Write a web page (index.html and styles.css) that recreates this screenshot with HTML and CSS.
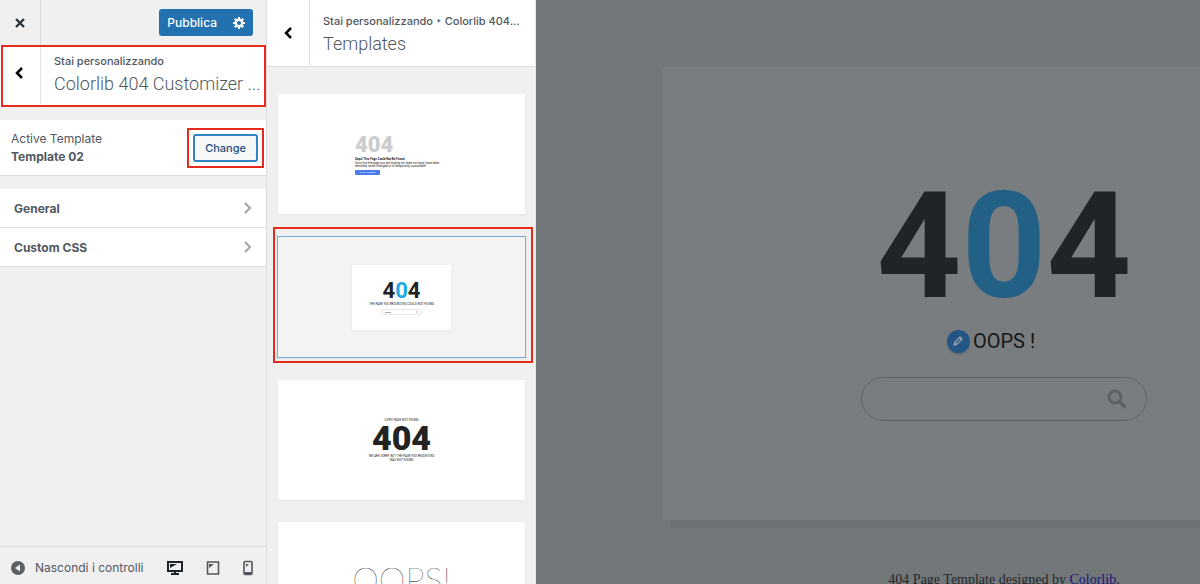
FILE: index.html
```
<!DOCTYPE html>
<html lang="it">
<head>
  <meta charset="UTF-8">
  <title>Customizer - Colorlib 404</title>
  <link rel="stylesheet" href="styles.css">
</head>
<body>

<div class="customizer">
  <!-- Left: controls -->
  <aside class="sidebar">
    <div class="top-bar">
      <button class="close-btn" aria-label="Chiudi">
        <svg width="12" height="12" viewBox="0 0 12 12"><path d="M2 2l8 8M10 2l-8 8" stroke="#2c3338" stroke-width="2.4"/></svg>
      </button>
      <div class="publish">
        <button class="publish-btn">Pubblica</button>
        <button class="gear-btn" aria-label="Impostazioni">
          <svg width="12" height="12" viewBox="0 0 12 12">
            <g stroke="#fff" fill="none" stroke-width="2.2">
              <circle cx="6" cy="6" r="3.2"/>
              <path d="M6 0v2.4M6 9.6v2.4M0 6h2.4M9.6 6h2.4M1.8 1.8l1.6 1.6M8.6 8.6l1.6 1.6M10.2 1.8l-1.6 1.6M3.4 8.6l-1.6 1.6"/>
            </g>
          </svg>
        </button>
      </div>
    </div>

    <div class="panel-title marked">
      <button class="back-btn" aria-label="Indietro">
        <svg width="10" height="14" viewBox="0 0 10 14"><path d="M8 2L3 7l5 5" fill="none" stroke="#000" stroke-width="2.5"/></svg>
      </button>
      <div class="title-text">
        <span class="crumb">Stai personalizzando</span>
        <h1>Colorlib 404 Customizer ...</h1>
      </div>
    </div>

    <div class="active-template">
      <div>
        <p>Active Template</p>
        <strong>Template 02</strong>
      </div>
      <div class="change-wrap">
        <button class="change-btn">Change</button>
      </div>
    </div>

    <nav class="sections">
      <button>General
        <svg width="8" height="14" viewBox="0 0 8 14"><path d="M1 2l5 5-5 5" fill="none" stroke="#a0a4a8" stroke-width="2"/></svg>
      </button>
      <button>Custom CSS
        <svg width="8" height="14" viewBox="0 0 8 14"><path d="M1 2l5 5-5 5" fill="none" stroke="#a0a4a8" stroke-width="2"/></svg>
      </button>
    </nav>

    <footer class="side-footer">
      <button class="collapse-btn">
        <svg width="14" height="14" viewBox="0 0 14 14"><circle cx="7" cy="7" r="7" fill="#5c6064"/><path d="M9 3.5v7L4 7z" fill="#f0f0f1"/></svg>
        Nascondi i controlli
      </button>
      <div class="devices">
        <button aria-label="Desktop">
          <svg width="16" height="16" viewBox="0 0 16 16"><path d="M1 2h14v9H1z" fill="none" stroke="#1d2327" stroke-width="2"/><path d="M7 11h2v2h3v2H4v-2h3z" fill="#1d2327"/><path d="M3 4h7L3 8z" fill="#1d2327"/></svg>
        </button>
        <button aria-label="Tablet">
          <svg width="14" height="16" viewBox="0 0 14 16"><path d="M1.5 2h11v12h-11z" fill="none" stroke="#50575e" stroke-width="1.6"/><path d="M3 4h5L3 8z" fill="#50575e"/></svg>
        </button>
        <button aria-label="Smartphone">
          <svg width="10" height="16" viewBox="0 0 10 16"><rect x="1" y="1.5" width="8" height="13" rx="1" fill="none" stroke="#50575e" stroke-width="1.6"/><path d="M3 4h3L3 7zM2 12h6v2H2z" fill="#50575e"/></svg>
        </button>
      </div>
    </footer>
  </aside>

  <!-- Middle: template list -->
  <section class="templates">
    <div class="templates-head">
      <button class="back-btn" aria-label="Indietro">
        <svg width="10" height="14" viewBox="0 0 10 14"><path d="M8 2L3 7l5 5" fill="none" stroke="#000" stroke-width="2.5"/></svg>
      </button>
      <div class="title-text">
        <span class="crumb">Stai personalizzando ‣ Colorlib 404...</span>
        <h2>Templates</h2>
      </div>
    </div>

    <div class="template-list">
      <div class="thumb thumb-one">
        <div class="mini">
          <div class="digits">404</div>
          <b>Oops! This Page Could Not Be Found</b>
          <p>Sorry but the page you are looking for does not exist, have been removed, name changed or is temporarily unavailable</p>
          <span class="mini-btn">Go To Homepage</span>
        </div>
      </div>

      <div class="thumb selected">
        <div class="mini-card">
          <div class="digits">4<span>0</span>4</div>
          <p>THE PAGE YOU REQUESTED COULD NOT FOUND</p>
          <div class="mini-search"><span>Search</span><i></i></div>
        </div>
      </div>

      <div class="thumb thumb-three">
        <p>OOPS! PAGE NOT FOUND</p>
        <div class="digits">404</div>
        <p>WE ARE SORRY, BUT THE PAGE YOU REQUESTED<br>WAS NOT FOUND</p>
      </div>

      <div class="thumb thumb-four">
        <div class="digits">OOPS!</div>
      </div>
    </div>
  </section>

  <!-- Right: dimmed site preview -->
  <main class="preview">
    <div class="page-card">
      <div class="big-404">4<span>0</span>4</div>
      <h3>
        <button class="edit-btn" aria-label="Modifica">
          <svg width="14" height="14" viewBox="0 0 14 14"><path d="M2 12l1-4 6-6 3 3-6 6z" fill="#8f9ca8"/><path d="M5 9l4-4" stroke="#245685" stroke-width="1.5"/></svg>
        </button>OOPS !
      </h3>
      <form class="search">
        <input type="text" aria-label="Search">
        <svg width="20" height="20" viewBox="0 0 20 20"><circle cx="8" cy="8" r="6" fill="none" stroke="#5b5f62" stroke-width="2.8"/><path d="M12.5 12.5l6 6" stroke="#5b5f62" stroke-width="3.2"/></svg>
      </form>
    </div>
    <p class="credit">404 Page Template designed by <a href="#">Colorlib</a>.</p>
  </main>
</div>

</body>
</html>
```
FILE: styles.css
```
* {
  box-sizing: border-box;
}

body {
  margin: 0;
  font-family: Inter, "Liberation Sans", sans-serif;
  font-size: 12px;
  color: #50575e;
  background: #f0f0f1;
}

button {
  font: inherit;
  color: inherit;
  border: none;
  background: none;
  padding: 0;
  margin: 0;
  cursor: pointer;
}

svg {
  display: block;
}

h1, h2, h3, p {
  margin: 0;
}

.customizer {
  display: flex;
  height: 100vh;
  overflow: hidden;
}

/* sidebar */
.sidebar {
  flex: 0 0 267px;
  min-width: 0;
  display: flex;
  flex-direction: column;
  border-right: 1px solid #dcdcde;
}

.top-bar {
  display: flex;
  justify-content: space-between;
  align-items: center;
  height: 45px;
  padding-right: 13px;
}

.close-btn {
  display: grid;
  place-items: center;
  width: 41px;
  height: 100%;
  border-right: 1px solid #dcdcde;
}

.publish {
  display: flex;
  height: 27px;
  background: #2271b1;
  border-radius: 3px;
  color: #fff;
  font-weight: 500;
}

.publish-btn {
  padding: 0 8px;
}

.gear-btn {
  padding: 0 8px;
}

.panel-title,
.templates-head {
  display: flex;
  background: #fff;
}

.panel-title {
  height: 62px;
}

.back-btn {
  flex: 0 0 43px;
  display: grid;
  place-items: center;
  border-right: 1px solid #e2e2e4;
}

.panel-title .back-btn {
  flex-basis: 41px;
  padding: 0 3px 6px 0;
}

.title-text {
  flex: 1;
  min-width: 0;
  padding: 7px 0 0 13px;
  white-space: nowrap;
}

.crumb {
  display: block;
  font-size: 11px;
  line-height: 18px;
  font-weight: 500;
}

h1, h2 {
  font-family: Roboto, sans-serif;
  font-size: 18px;
  line-height: 28px;
  font-weight: 300;
}

/* red highlight frames */
.marked,
.change-wrap,
.selected {
  position: relative;
}

.marked::after,
.change-wrap::after,
.selected::after {
  content: "";
  position: absolute;
  inset: -6px;
  border: 2px solid #e62a1c;
  pointer-events: none;
}

.marked::after {
  inset: 0 0 0 1px;
}

.active-template {
  display: flex;
  justify-content: space-between;
  align-items: center;
  height: 56px;
  margin-top: 13px;
  padding: 0 8px 0 11px;
  background: #fff;
  border-bottom: 1px solid #dcdcde;
  line-height: 18px;
}

.active-template strong {
  font-weight: 700;
}

.change-btn {
  display: block;
  height: 28px;
  padding: 0 10px;
  border: 2px solid #3582c4;
  border-radius: 3px;
  background: #f6f7f7;
  color: #1d4f78;
  font-size: 11px;
  font-weight: 500;
}

.sections {
  margin-top: 13px;
}

.sections button {
  display: flex;
  justify-content: space-between;
  align-items: center;
  width: 100%;
  height: 39px;
  padding: 0 14px;
  background: #fff;
  border-bottom: 1px solid #dcdcde;
  font-weight: 700;
}

.side-footer {
  display: flex;
  justify-content: space-between;
  align-items: center;
  height: 38px;
  margin-top: auto;
  padding: 4px 13px 0 11px;
  border-top: 1px solid #dcdcde;
}

.collapse-btn {
  display: flex;
  align-items: center;
  gap: 10px;
}

.devices {
  display: flex;
  gap: 23px;
}

/* template list */
.templates {
  flex: 0 0 269px;
  min-width: 0;
  border-right: 1px solid #e3e8ee;
}

.templates-head {
  height: 67px;
  border-bottom: 1px solid #dcdcde;
}

.templates-head .title-text {
  padding-top: 12px;
}

.template-list {
  display: flex;
  flex-direction: column;
  gap: 22px;
  padding: 27px 10px 0 11px;
}

.thumb {
  flex: none;
  display: flex;
  flex-direction: column;
  align-items: center;
  justify-content: center;
  height: 120px;
  background: #fff;
  box-shadow: 0 1px 2px rgba(0, 0, 0, 0.06);
  font-family: Roboto, sans-serif;
  font-size: 3px;
  line-height: 4px;
  color: #222;
}

.thumb .digits {
  font-weight: 900;
}

.thumb-one {
  align-items: stretch;
  padding: 0 80px 0 77px;
}

.thumb-one .digits {
  font-size: 22px;
  line-height: 22px;
  color: #ccc;
}

.thumb-one b {
  display: block;
  line-height: 6px;
}

.thumb-one p {
  line-height: 3px;
}

.mini-btn {
  display: block;
  width: 25px;
  margin-top: 2px;
  background: #4a7bec;
  border-radius: 1px;
  color: #fff;
  font-size: 2px;
  line-height: 5px;
  text-align: center;
}

.selected {
  height: 122px;
  margin: 0 -1px;
  background: #f3f3f3;
  border: 1px solid #72aee6;
}

.selected::after {
  inset: -10px -8px -6px -5px;
}

.mini-card {
  display: flex;
  flex-direction: column;
  align-items: center;
  width: 99px;
  height: 65px;
  padding-top: 14px;
  background: #fff;
  box-shadow: 0 1px 4px rgba(0, 0, 0, 0.05);
}

.mini-card .digits {
  font-size: 22px;
  line-height: 23px;
  font-weight: 700;
}

.mini-card .digits span {
  color: #1eabe5;
}

.mini-search {
  display: flex;
  justify-content: space-between;
  align-items: center;
  width: 41px;
  height: 6px;
  margin-top: 3px;
  padding: 0 3px;
  border: 1px solid #e6e6e6;
  border-radius: 3px;
  font-size: 2px;
}

.mini-search i {
  width: 2px;
  height: 2px;
  border-radius: 50%;
  background: #ccc;
}

.thumb-three {
  text-align: center;
}

.thumb-three .digits {
  font-size: 34px;
  line-height: 32px;
}

.thumb-four .digits {
  padding-bottom: 6px;
  font-family: Lato, sans-serif;
  font-size: 34px;
  line-height: 34px;
  font-weight: 100;
  color: #000;
}

/* preview */
.preview {
  flex: 1;
  min-width: 0;
  overflow: hidden;
  padding: 67px 0 0 126px;
  background: #727779;
}

.page-card,
.credit {
  width: 684px;
  text-align: center;
}

.page-card {
  height: 453px;
  padding-top: 98px;
  background: #797d7f;
  box-shadow: 0 16px 0 -8px #6c7173;
  font-family: Roboto, sans-serif;
  color: #1f2427;
}

.big-404 {
  font-size: 148px;
  line-height: 164px;
  font-weight: 700;
}

.big-404 span {
  color: #236086;
}

.page-card h3 {
  display: flex;
  align-items: center;
  justify-content: center;
  gap: 3px;
  height: 24px;
  padding-right: 26px;
  font-size: 20px;
  font-weight: 400;
  color: #15181a;
}

.edit-btn {
  display: grid;
  place-items: center;
  width: 23px;
  height: 23px;
  border-radius: 50%;
  background: #245685;
  box-shadow: 0 2px 1px #696e71;
}

.search {
  display: flex;
  align-items: center;
  width: 286px;
  height: 44px;
  margin: 24px auto 0;
  padding: 0 19px;
  border: 1px solid #606467;
  border-radius: 22px;
}

.search input {
  flex: 1;
  min-width: 0;
  border: none;
  outline: none;
  background: none;
  font-size: 16px;
}

.credit {
  margin-top: 52px;
  font-family: "Liberation Serif", serif;
  font-size: 14px;
  line-height: 16px;
  color: #24282a;
}

.credit a {
  color: #16167c;
}
```
